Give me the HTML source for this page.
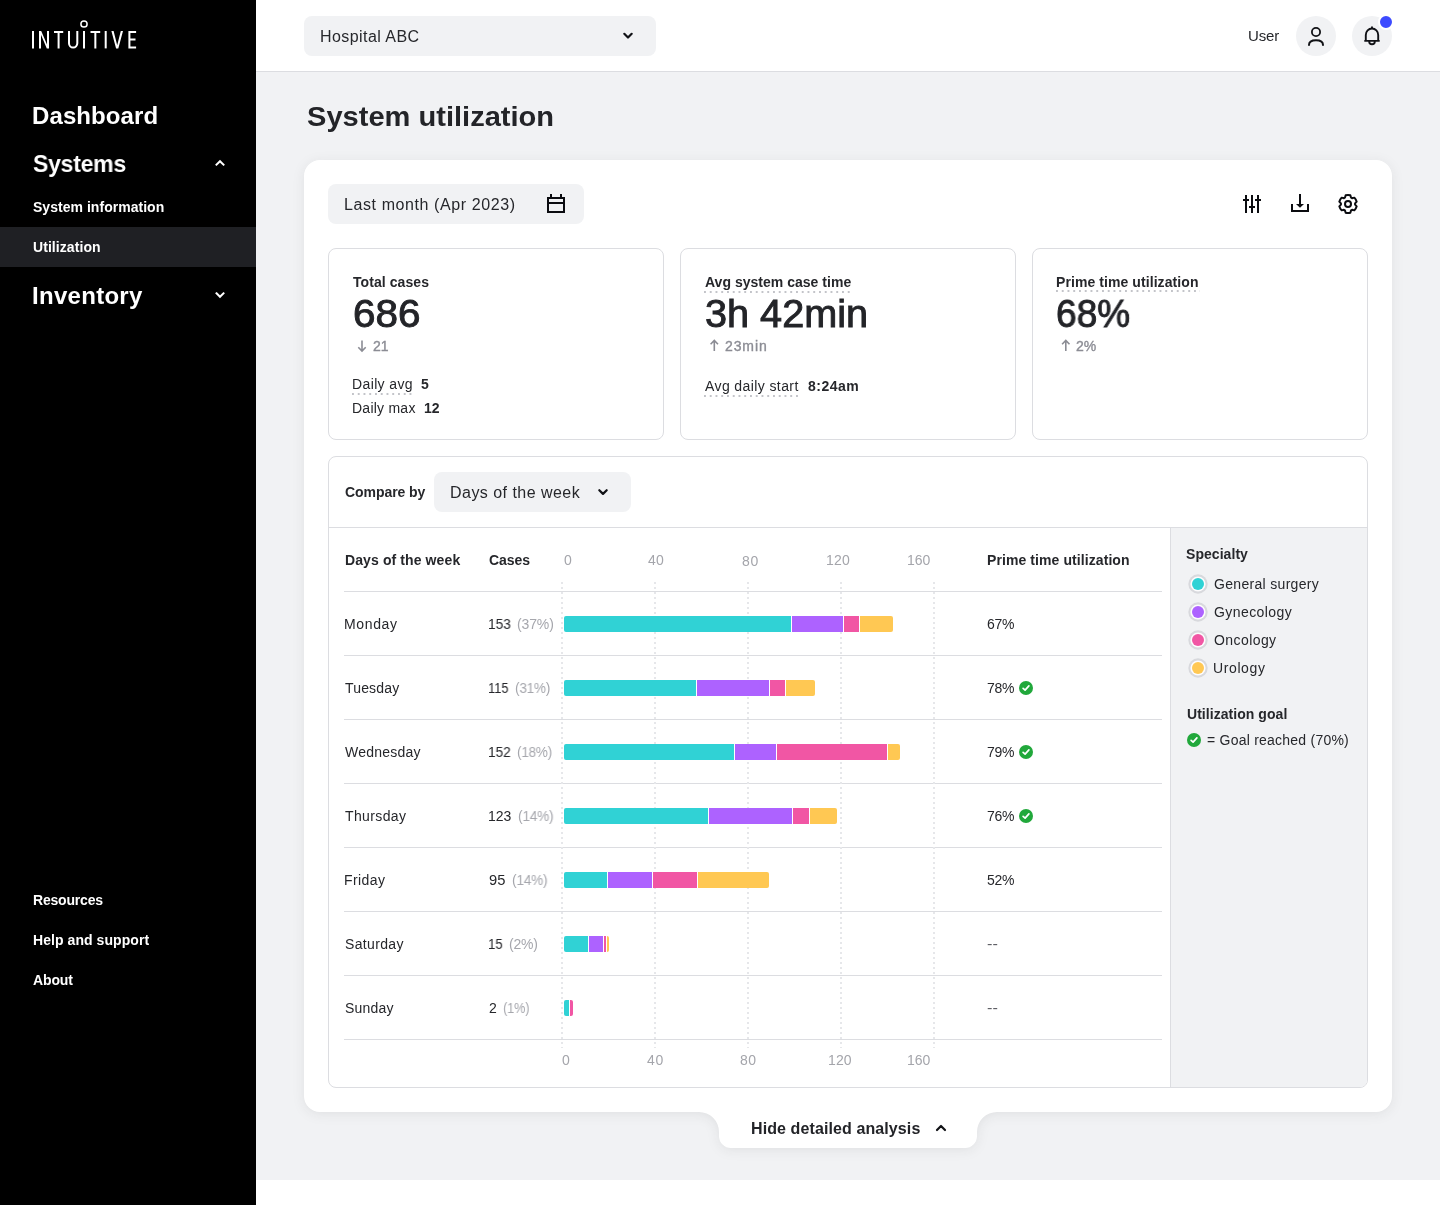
<!DOCTYPE html>
<html><head><meta charset="utf-8"><title>System utilization</title>
<style>
html,body{margin:0;padding:0;}
body{width:1440px;height:1205px;overflow:hidden;position:relative;background:#ffffff;font-family:"Liberation Sans",sans-serif;}
.ab{position:absolute;}
.t{position:absolute;white-space:nowrap;font-family:"Liberation Sans",sans-serif;will-change:transform;}
#side{position:absolute;left:0;top:0;width:256px;height:1205px;background:#000;}
#hl{position:absolute;left:0;top:227px;width:256px;height:40px;background:#1f2024;}
#main{position:absolute;left:256px;top:72px;width:1184px;height:1108px;background:#f1f2f4;}
#head{position:absolute;left:256px;top:0;width:1184px;height:71px;background:#fff;border-bottom:1px solid #dcdde1;}
.sel{position:absolute;background:#f1f2f4;border-radius:8px;}
.circ{position:absolute;width:40px;height:40px;border-radius:50%;background:#f1f2f4;}
.kpi{position:absolute;top:248px;width:334px;height:190px;border:1px solid #dcdde1;border-radius:8px;background:#fff;}
#cmp{position:absolute;left:328px;top:456px;width:1038px;height:630px;border:1px solid #dcdde1;border-radius:8px;background:#fff;overflow:hidden;}
#cmpsep{position:absolute;left:0;top:70px;width:1038px;height:1px;background:#dcdde1;}
#legend{position:absolute;left:841px;top:71px;width:197px;height:559px;background:#f1f2f4;border-left:1px solid #dcdde1;}
.sep{position:absolute;left:344px;width:818px;height:1px;background:#dcdde1;}
.grid{position:absolute;top:582px;height:466px;width:2px;background-image:linear-gradient(to bottom,#e6e7ea 0,#e6e7ea 2px,transparent 2px,transparent 5px);background-size:2px 5px;}
.b{position:absolute;height:16px;}
.ldot{position:absolute;width:12px;height:12px;border-radius:50%;box-shadow:0 0 0 1.6px #fdfcfd,0 0 0 3.7px #d8d9dd;}
.dot-ul{position:absolute;height:2px;background-image:linear-gradient(to right,#c3c4c9 0,#c3c4c9 2px,transparent 2px,transparent 5.75px);background-size:5.75px 2px;}
</style></head>
<body>
<div id="main"></div>
<div id="head"></div>
<div class="sel" style="left:304px;top:16px;width:352px;height:40px"></div>
<div class="circ" style="left:1296px;top:16px"></div>
<div class="circ" style="left:1352px;top:16px"></div>
<div class="ab" style="left:1378px;top:14px;width:12px;height:12px;border-radius:50%;background:#3d4bff;border:2px solid #fff"></div>

<svg class="ab" style="left:0;top:0;overflow:visible;filter:drop-shadow(0 2px 6px rgba(20,22,30,0.08))" width="1440" height="1205">
<path fill="#fff" d="M320 160 H1376 A16 16 0 0 1 1392 176 V1096 A16 16 0 0 1 1376 1112 H997 A20 20 0 0 0 977 1132 V1136 A12 12 0 0 1 965 1148 H731 A12 12 0 0 1 719 1136 V1132 A20 20 0 0 0 699 1112 H320 A16 16 0 0 1 304 1096 V176 A16 16 0 0 1 320 160 Z"/>
</svg>

<div class="sel" style="left:328px;top:184px;width:256px;height:40px"></div>
<div class="kpi" style="left:328px"></div>
<div class="kpi" style="left:680px"></div>
<div class="kpi" style="left:1032px"></div>
<div class="dot-ul" style="left:352px;top:393px;width:61px"></div>
<div class="dot-ul" style="left:704px;top:291px;width:148px"></div>
<div class="dot-ul" style="left:704px;top:395px;width:96px"></div>
<div class="dot-ul" style="left:1056px;top:290px;width:144px"></div>

<div id="cmp"><div id="cmpsep"></div><div id="legend"></div></div>
<div class="sel" style="left:434px;top:472px;width:197px;height:40px"></div>
<div class="sep" style="top:591px"></div>
<div class="sep" style="top:655px"></div>
<div class="sep" style="top:719px"></div>
<div class="sep" style="top:783px"></div>
<div class="sep" style="top:847px"></div>
<div class="sep" style="top:911px"></div>
<div class="sep" style="top:975px"></div>
<div class="sep" style="top:1039px"></div>
<div class="grid" style="left:561px"></div>
<div class="grid" style="left:654px"></div>
<div class="grid" style="left:747px"></div>
<div class="grid" style="left:840px"></div>
<div class="grid" style="left:933px"></div>
<div class="b" style="left:564px;top:616px;width:227px;background:#30d2d5;border-radius:2px 0 0 2px;"></div>
<div class="b" style="left:792px;top:616px;width:51px;background:#ad62ff;"></div>
<div class="b" style="left:844px;top:616px;width:15px;background:#f156a4;"></div>
<div class="b" style="left:860px;top:616px;width:33px;background:#ffc853;border-radius:0 2px 2px 0;"></div>
<div class="b" style="left:564px;top:680px;width:132px;background:#30d2d5;border-radius:2px 0 0 2px;"></div>
<div class="b" style="left:697px;top:680px;width:72px;background:#ad62ff;"></div>
<div class="b" style="left:770px;top:680px;width:15px;background:#f156a4;"></div>
<div class="b" style="left:786px;top:680px;width:29px;background:#ffc853;border-radius:0 2px 2px 0;"></div>
<div class="b" style="left:564px;top:744px;width:170px;background:#30d2d5;border-radius:2px 0 0 2px;"></div>
<div class="b" style="left:735px;top:744px;width:41px;background:#ad62ff;"></div>
<div class="b" style="left:777px;top:744px;width:110px;background:#f156a4;"></div>
<div class="b" style="left:888px;top:744px;width:12px;background:#ffc853;border-radius:0 2px 2px 0;"></div>
<div class="b" style="left:564px;top:808px;width:144px;background:#30d2d5;border-radius:2px 0 0 2px;"></div>
<div class="b" style="left:709px;top:808px;width:83px;background:#ad62ff;"></div>
<div class="b" style="left:793px;top:808px;width:16px;background:#f156a4;"></div>
<div class="b" style="left:810px;top:808px;width:27px;background:#ffc853;border-radius:0 2px 2px 0;"></div>
<div class="b" style="left:564px;top:872px;width:43px;background:#30d2d5;border-radius:2px 0 0 2px;"></div>
<div class="b" style="left:608px;top:872px;width:44px;background:#ad62ff;"></div>
<div class="b" style="left:653px;top:872px;width:44px;background:#f156a4;"></div>
<div class="b" style="left:698px;top:872px;width:71px;background:#ffc853;border-radius:0 2px 2px 0;"></div>
<div class="b" style="left:564px;top:936px;width:24px;background:#30d2d5;border-radius:2px 0 0 2px;"></div>
<div class="b" style="left:589px;top:936px;width:14px;background:#ad62ff;"></div>
<div class="b" style="left:604px;top:936px;width:2px;background:#f156a4;"></div>
<div class="b" style="left:607px;top:936px;width:2px;background:#ffc853;border-radius:0 2px 2px 0;"></div>
<div class="b" style="left:564px;top:1000px;width:5px;background:#30d2d5;border-radius:2px 0 0 2px;"></div>
<div class="b" style="left:570px;top:1000px;width:3px;background:#f156a4;border-radius:0 2px 2px 0;"></div>
<svg class="ab" style="left:1019px;top:681px" width="14" height="14" viewBox="0 0 14 14"><circle cx="7" cy="7" r="7" fill="#21a83b"/><path d="M4.1 7.3 L6.1 9.1 L9.9 4.9" fill="none" stroke="#fff" stroke-width="1.7" stroke-linecap="round" stroke-linejoin="round"/></svg>
<svg class="ab" style="left:1019px;top:745px" width="14" height="14" viewBox="0 0 14 14"><circle cx="7" cy="7" r="7" fill="#21a83b"/><path d="M4.1 7.3 L6.1 9.1 L9.9 4.9" fill="none" stroke="#fff" stroke-width="1.7" stroke-linecap="round" stroke-linejoin="round"/></svg>
<svg class="ab" style="left:1019px;top:809px" width="14" height="14" viewBox="0 0 14 14"><circle cx="7" cy="7" r="7" fill="#21a83b"/><path d="M4.1 7.3 L6.1 9.1 L9.9 4.9" fill="none" stroke="#fff" stroke-width="1.7" stroke-linecap="round" stroke-linejoin="round"/></svg>
<div class="ldot" style="left:1192px;top:578px;background:#30d2d5"></div>
<div class="ldot" style="left:1192px;top:606px;background:#ad62ff"></div>
<div class="ldot" style="left:1192px;top:634px;background:#f156a4"></div>
<div class="ldot" style="left:1192px;top:662px;background:#ffc853"></div>

<div id="side"></div>
<div id="hl"></div>

<svg class="ab" style="left:0;top:0" width="1440" height="1205" fill="none" stroke-linecap="butt">
<!-- logo -->
<g stroke="#fff" stroke-width="2">
<path d="M33 31 V48.4"/>
<path d="M54 32 H63.2 M58.6 32 V48.4"/>
<path d="M69 31 V43.2 A4.15 4.4 0 0 0 77.3 43.2 V31"/>
<path d="M84 31 V48.4"/>
<path d="M90.5 32 H100.2 M95.35 32 V48.4"/>
<path d="M105.7 31 V48.4"/>
<path d="M136.1 32 H129.4 V47.4 H136.1 M129.4 39.6 H135.5"/>
</g>
<path fill="#fff" stroke="none" d="M39 31 H41.2 L47 44.6 V31 H49 V48.4 H46.8 L41 34.8 V48.4 H39 Z"/>
<path fill="#fff" stroke="none" d="M111.4 31 H113.6 L117.2 45.2 L120.8 31 H123 L118.3 48.4 H116.1 Z"/>
<circle cx="84" cy="24" r="3.1" stroke="#fff" stroke-width="1.5"/>
<!-- sidebar chevrons -->
<path d="M216.5 164.7 L220 161.2 L223.5 164.7" stroke="#fff" stroke-width="2" stroke-linecap="square"/>
<path d="M216.5 293.3 L220 296.8 L223.5 293.3" stroke="#fff" stroke-width="2" stroke-linecap="square"/>
<!-- header chevron -->
<path d="M624.3 33.8 L628 37.5 L631.7 33.8" stroke="#111216" stroke-width="2.2" stroke-linecap="round" stroke-linejoin="round"/>
<!-- compare chevron -->
<path d="M599.3 490.2 L603 493.9 L606.7 490.2" stroke="#111216" stroke-width="2.2" stroke-linecap="round" stroke-linejoin="round"/>
<!-- tab chevron -->
<path d="M937 1130 L941 1126 L945 1130" stroke="#111216" stroke-width="2.2" stroke-linecap="round" stroke-linejoin="round"/>
<!-- user icon -->
<circle cx="1316" cy="32" r="4.1" stroke="#111216" stroke-width="1.8"/>
<path d="M1309 44.9 C1309 41.8 1312 40.2 1316 40.2 C1320 40.2 1323 41.8 1323 44.9" stroke="#111216" stroke-width="2" stroke-linecap="round"/>
<!-- bell -->
<path d="M1372 26.5 V28.3 M1365.8 40.9 V35 A6.2 6.6 0 0 1 1378.2 35 V40.9 M1364.3 40.9 H1379.7 M1369.2 41.5 A2.8 2.8 0 0 0 1374.8 41.5" stroke="#111216" stroke-width="1.9"/>
<!-- calendar -->
<rect x="548" y="198" width="16" height="14" stroke="#0b0c10" stroke-width="2"/>
<path d="M549 203 H563 M551 194 V198 M561 194 V198" stroke="#0b0c10" stroke-width="2"/>
<!-- sliders -->
<path d="M1246 195 V213 M1252 195 V213 M1258 195 V213 M1243 200 H1249 M1249 207 H1255 M1255 200 H1261" stroke="#0b0c10" stroke-width="2"/>
<!-- download -->
<path d="M1300 194 V206 M1292 204 V211 H1308 V204" stroke="#0b0c10" stroke-width="2"/>
<path d="M1296 204 L1304 204 L1300 207.8 Z" fill="#0b0c10"/>
<!-- gear -->
<path d="M1345.00 197.57 L1345.67 195.31 A9.0 9.0 0 0 1 1350.33 195.31 L1351.00 197.57 A7.1 7.1 0 0 1 1352.07 198.18 L1354.36 197.64 A9.0 9.0 0 0 1 1356.69 201.67 L1355.07 203.38 A7.1 7.1 0 0 1 1355.07 204.62 L1356.69 206.33 A9.0 9.0 0 0 1 1354.36 210.36 L1352.07 209.82 A7.1 7.1 0 0 1 1351.00 210.43 L1350.33 212.69 A9.0 9.0 0 0 1 1345.67 212.69 L1345.00 210.43 A7.1 7.1 0 0 1 1343.93 209.82 L1341.64 210.36 A9.0 9.0 0 0 1 1339.31 206.33 L1340.93 204.62 A7.1 7.1 0 0 1 1340.93 203.38 L1339.31 201.67 A9.0 9.0 0 0 1 1341.64 197.64 L1343.93 198.18 A7.1 7.1 0 0 1 1345.00 197.57 Z" stroke="#0b0c10" stroke-width="2" stroke-linejoin="round"/>
<circle cx="1348" cy="204" r="3" stroke="#0b0c10" stroke-width="2"/>
<!-- kpi arrows -->
<path d="M362 340.5 V351 M358.3 347.3 L362 351 L365.7 347.3" stroke="#8b8c94" stroke-width="1.6"/>
<path d="M714.3 340.5 V351 M710.6 344.2 L714.3 340.5 L718 344.2" stroke="#8b8c94" stroke-width="1.6"/>
<path d="M1065.8 340.5 V351 M1062.1 344.2 L1065.8 340.5 L1069.5 344.2" stroke="#8b8c94" stroke-width="1.6"/>
</svg>
<svg class="ab" style="left:1187px;top:733px" width="14" height="14" viewBox="0 0 14 14"><circle cx="7" cy="7" r="7" fill="#21a83b"/><path d="M4.1 7.3 L6.1 9.1 L9.9 4.9" fill="none" stroke="#fff" stroke-width="1.7" stroke-linecap="round" stroke-linejoin="round"/></svg>
<div class="t" style="left:32.20px;top:103.90px;font-size:24px;line-height:24px;font-weight:700;color:#ffffff;letter-spacing:0.101px">Dashboard</div>
<div class="t" style="left:33.20px;top:151.70px;font-size:24px;line-height:24px;font-weight:700;color:#ffffff;letter-spacing:-0.250px;transform:scaleX(0.9579);transform-origin:0 0">Systems</div>
<div class="t" style="left:33.20px;top:199.70px;font-size:14px;line-height:14px;font-weight:700;color:#ffffff;letter-spacing:0.033px">System information</div>
<div class="t" style="left:33.20px;top:239.70px;font-size:14px;line-height:14px;font-weight:700;color:#ffffff;letter-spacing:0.067px">Utilization</div>
<div class="t" style="left:32.20px;top:283.70px;font-size:24px;line-height:24px;font-weight:700;color:#ffffff;letter-spacing:0.291px">Inventory</div>
<div class="t" style="left:32.70px;top:892.70px;font-size:14px;line-height:14px;font-weight:700;color:#ffffff;letter-spacing:-0.188px">Resources</div>
<div class="t" style="left:32.70px;top:932.70px;font-size:14px;line-height:14px;font-weight:700;color:#ffffff;letter-spacing:0.063px">Help and support</div>
<div class="t" style="left:32.70px;top:972.70px;font-size:14px;line-height:14px;font-weight:700;color:#ffffff;letter-spacing:-0.116px">About</div>
<div class="t" style="left:320.00px;top:28.70px;font-size:16px;line-height:16px;font-weight:400;color:#26272b;letter-spacing:0.437px">Hospital ABC</div>
<div class="t" style="left:1248.40px;top:28.00px;font-size:15px;line-height:15px;font-weight:400;color:#26272b;letter-spacing:-0.125px">User</div>
<div class="t" style="left:306.70px;top:103.70px;font-size:27px;line-height:27px;font-weight:700;color:#232428;transform:scaleX(1.0765);transform-origin:0 0">System utilization</div>
<div class="t" style="left:344.30px;top:196.70px;font-size:16px;line-height:16px;font-weight:400;color:#26272b;letter-spacing:0.592px">Last month (Apr 2023)</div>
<div class="t" style="left:352.60px;top:274.90px;font-size:14px;line-height:14px;font-weight:700;color:#26272b;letter-spacing:0.076px">Total cases</div>
<div class="t" style="left:353.04px;top:294.90px;font-size:38px;line-height:38px;font-weight:400;color:#232428;transform:scaleX(1.0642);transform-origin:0 0;-webkit-text-stroke:0.9px #232428">686</div>
<div class="t" style="left:373.00px;top:338.80px;font-size:14px;line-height:14px;font-weight:400;color:#8b8c94;-webkit-text-stroke:0.35px #8b8c94">21</div>
<div class="t" style="left:351.80px;top:376.70px;font-size:14px;line-height:14px;font-weight:400;color:#26272b;letter-spacing:0.376px">Daily avg</div>
<div class="t" style="left:420.90px;top:376.70px;font-size:14px;line-height:14px;font-weight:700;color:#26272b">5</div>
<div class="t" style="left:351.80px;top:400.70px;font-size:14px;line-height:14px;font-weight:400;color:#26272b;letter-spacing:0.243px">Daily max</div>
<div class="t" style="left:424.20px;top:400.70px;font-size:14px;line-height:14px;font-weight:700;color:#26272b">12</div>
<div class="t" style="left:704.60px;top:274.90px;font-size:14px;line-height:14px;font-weight:700;color:#26272b;letter-spacing:0.021px">Avg system case time</div>
<div class="t" style="left:705.16px;top:294.70px;font-size:38px;line-height:38px;font-weight:400;color:#232428;transform:scaleX(1.0432);transform-origin:0 0;-webkit-text-stroke:0.9px #232428">3h 42min</div>
<div class="t" style="left:724.90px;top:338.70px;font-size:14px;line-height:14px;font-weight:400;color:#8b8c94;letter-spacing:0.889px;-webkit-text-stroke:0.35px #8b8c94">23min</div>
<div class="t" style="left:704.60px;top:378.90px;font-size:14px;line-height:14px;font-weight:400;color:#26272b;letter-spacing:0.401px">Avg daily start</div>
<div class="t" style="left:808.00px;top:378.90px;font-size:14px;line-height:14px;font-weight:700;color:#26272b;letter-spacing:0.479px">8:24am</div>
<div class="t" style="left:1056.40px;top:275.00px;font-size:14px;line-height:14px;font-weight:700;color:#26272b;letter-spacing:0.079px">Prime time utilization</div>
<div class="t" style="left:1056.23px;top:294.50px;font-size:38px;line-height:38px;font-weight:400;color:#232428;transform:scaleX(0.9749);transform-origin:0 0;-webkit-text-stroke:0.9px #232428">68%</div>
<div class="t" style="left:1076.40px;top:338.70px;font-size:14px;line-height:14px;font-weight:400;color:#8b8c94;-webkit-text-stroke:0.35px #8b8c94">2%</div>
<div class="t" style="left:344.60px;top:484.70px;font-size:14px;line-height:14px;font-weight:700;color:#26272b;letter-spacing:-0.058px">Compare by</div>
<div class="t" style="left:449.90px;top:484.50px;font-size:16px;line-height:16px;font-weight:400;color:#26272b;letter-spacing:0.465px">Days of the week</div>
<div class="t" style="left:344.50px;top:552.70px;font-size:14px;line-height:14px;font-weight:700;color:#26272b;letter-spacing:0.106px">Days of the week</div>
<div class="t" style="left:488.70px;top:552.70px;font-size:14px;line-height:14px;font-weight:700;color:#26272b;letter-spacing:-0.067px">Cases</div>
<div class="t" style="left:986.60px;top:553.00px;font-size:14px;line-height:14px;font-weight:700;color:#26272b;letter-spacing:0.083px">Prime time utilization</div>
<div class="t" style="left:564.20px;top:553.30px;font-size:14px;line-height:14px;font-weight:400;color:#a4a5ab">0</div>
<div class="t" style="left:648.00px;top:553.30px;font-size:14px;line-height:14px;font-weight:400;color:#a4a5ab;letter-spacing:0.314px">40</div>
<div class="t" style="left:741.90px;top:554.30px;font-size:14px;line-height:14px;font-weight:400;color:#a4a5ab;letter-spacing:0.814px">80</div>
<div class="t" style="left:825.60px;top:553.30px;font-size:14px;line-height:14px;font-weight:400;color:#a4a5ab;letter-spacing:0.214px">120</div>
<div class="t" style="left:906.70px;top:553.30px;font-size:14px;line-height:14px;font-weight:400;color:#a4a5ab;letter-spacing:-0.036px">160</div>
<div class="t" style="left:561.90px;top:1052.70px;font-size:14px;line-height:14px;font-weight:400;color:#a4a5ab">0</div>
<div class="t" style="left:646.90px;top:1052.70px;font-size:14px;line-height:14px;font-weight:400;color:#a4a5ab;letter-spacing:0.814px">40</div>
<div class="t" style="left:739.90px;top:1052.70px;font-size:14px;line-height:14px;font-weight:400;color:#a4a5ab;letter-spacing:0.514px">80</div>
<div class="t" style="left:827.80px;top:1052.70px;font-size:14px;line-height:14px;font-weight:400;color:#a4a5ab;letter-spacing:0.114px">120</div>
<div class="t" style="left:906.70px;top:1052.70px;font-size:14px;line-height:14px;font-weight:400;color:#a4a5ab;letter-spacing:-0.036px">160</div>
<div class="t" style="left:343.70px;top:616.70px;font-size:14px;line-height:14px;font-weight:400;color:#26272b;letter-spacing:0.639px">Monday</div>
<div class="t" style="left:488.22px;top:616.70px;font-size:14px;line-height:14px;font-weight:400;color:#26272b;transform:scaleX(0.9791);transform-origin:0 0">153</div>
<div class="t" style="left:517.10px;top:616.70px;font-size:14px;line-height:14px;font-weight:400;color:#a6a7ad;letter-spacing:-0.121px">(37%)</div>
<div class="t" style="left:986.60px;top:616.70px;font-size:14px;line-height:14px;font-weight:400;color:#26272b;letter-spacing:-0.250px;transform:scaleX(0.9899);transform-origin:0 0">67%</div>
<div class="t" style="left:344.70px;top:680.70px;font-size:14px;line-height:14px;font-weight:400;color:#26272b;letter-spacing:0.171px">Tuesday</div>
<div class="t" style="left:488.28px;top:680.70px;font-size:14px;line-height:14px;font-weight:400;color:#26272b;transform:scaleX(0.9195);transform-origin:0 0">115</div>
<div class="t" style="left:515.20px;top:680.70px;font-size:14px;line-height:14px;font-weight:400;color:#a6a7ad;letter-spacing:-0.250px;transform:scaleX(0.9697);transform-origin:0 0">(31%)</div>
<div class="t" style="left:986.60px;top:680.70px;font-size:14px;line-height:14px;font-weight:400;color:#26272b;letter-spacing:-0.250px;transform:scaleX(0.9899);transform-origin:0 0">78%</div>
<div class="t" style="left:344.70px;top:744.70px;font-size:14px;line-height:14px;font-weight:400;color:#26272b;letter-spacing:0.240px">Wednesday</div>
<div class="t" style="left:488.23px;top:744.70px;font-size:14px;line-height:14px;font-weight:400;color:#26272b;transform:scaleX(0.9746);transform-origin:0 0">152</div>
<div class="t" style="left:517.40px;top:744.70px;font-size:14px;line-height:14px;font-weight:400;color:#a6a7ad;letter-spacing:-0.250px;transform:scaleX(0.9641);transform-origin:0 0">(18%)</div>
<div class="t" style="left:986.60px;top:744.70px;font-size:14px;line-height:14px;font-weight:400;color:#26272b;letter-spacing:-0.250px;transform:scaleX(0.9899);transform-origin:0 0">79%</div>
<div class="t" style="left:344.70px;top:808.70px;font-size:14px;line-height:14px;font-weight:400;color:#26272b;letter-spacing:0.377px">Thursday</div>
<div class="t" style="left:488.20px;top:808.70px;font-size:14px;line-height:14px;font-weight:400;color:#26272b">123</div>
<div class="t" style="left:517.50px;top:808.70px;font-size:14px;line-height:14px;font-weight:400;color:#a6a7ad;letter-spacing:-0.250px;transform:scaleX(0.9781);transform-origin:0 0">(14%)</div>
<div class="t" style="left:986.60px;top:808.70px;font-size:14px;line-height:14px;font-weight:400;color:#26272b;letter-spacing:-0.250px;transform:scaleX(0.9899);transform-origin:0 0">76%</div>
<div class="t" style="left:343.70px;top:872.70px;font-size:14px;line-height:14px;font-weight:400;color:#26272b;letter-spacing:0.421px">Friday</div>
<div class="t" style="left:489.20px;top:872.70px;font-size:14px;line-height:14px;font-weight:400;color:#26272b;transform:scaleX(1.0516);transform-origin:0 0">95</div>
<div class="t" style="left:511.50px;top:872.70px;font-size:14px;line-height:14px;font-weight:400;color:#a6a7ad;letter-spacing:-0.250px;transform:scaleX(0.9781);transform-origin:0 0">(14%)</div>
<div class="t" style="left:986.60px;top:872.70px;font-size:14px;line-height:14px;font-weight:400;color:#26272b;letter-spacing:-0.250px;transform:scaleX(0.9899);transform-origin:0 0">52%</div>
<div class="t" style="left:344.70px;top:936.70px;font-size:14px;line-height:14px;font-weight:400;color:#26272b;letter-spacing:0.352px">Saturday</div>
<div class="t" style="left:488.25px;top:936.70px;font-size:14px;line-height:14px;font-weight:400;color:#26272b;transform:scaleX(0.9468);transform-origin:0 0">15</div>
<div class="t" style="left:509.20px;top:936.70px;font-size:14px;line-height:14px;font-weight:400;color:#a6a7ad;letter-spacing:-0.232px">(2%)</div>
<div class="t" style="left:986.80px;top:936.70px;font-size:14px;line-height:14px;font-weight:400;color:#5f6066;transform:scaleX(1.1592);transform-origin:0 0">--</div>
<div class="t" style="left:344.70px;top:1000.70px;font-size:14px;line-height:14px;font-weight:400;color:#26272b;letter-spacing:0.224px">Sunday</div>
<div class="t" style="left:489.20px;top:1000.70px;font-size:14px;line-height:14px;font-weight:400;color:#26272b">2</div>
<div class="t" style="left:502.60px;top:1000.70px;font-size:14px;line-height:14px;font-weight:400;color:#a6a7ad;letter-spacing:-0.250px;transform:scaleX(0.9166);transform-origin:0 0">(1%)</div>
<div class="t" style="left:986.80px;top:1000.70px;font-size:14px;line-height:14px;font-weight:400;color:#5f6066;transform:scaleX(1.1592);transform-origin:0 0">--</div>
<div class="t" style="left:1186.20px;top:546.70px;font-size:14px;line-height:14px;font-weight:700;color:#26272b;letter-spacing:0.051px">Specialty</div>
<div class="t" style="left:1214.40px;top:576.70px;font-size:14px;line-height:14px;font-weight:400;color:#26272b;letter-spacing:0.316px">General surgery</div>
<div class="t" style="left:1214.40px;top:604.70px;font-size:14px;line-height:14px;font-weight:400;color:#26272b;letter-spacing:0.419px">Gynecology</div>
<div class="t" style="left:1214.40px;top:632.70px;font-size:14px;line-height:14px;font-weight:400;color:#26272b;letter-spacing:0.422px">Oncology</div>
<div class="t" style="left:1213.40px;top:660.70px;font-size:14px;line-height:14px;font-weight:400;color:#26272b;letter-spacing:0.610px">Urology</div>
<div class="t" style="left:1187.10px;top:706.70px;font-size:14px;line-height:14px;font-weight:700;color:#26272b;letter-spacing:0.049px">Utilization goal</div>
<div class="t" style="left:1207.10px;top:732.70px;font-size:14px;line-height:14px;font-weight:400;color:#26272b;letter-spacing:0.232px">= Goal reached (70%)</div>
<div class="t" style="left:751.10px;top:1120.70px;font-size:16px;line-height:16px;font-weight:700;color:#232428;letter-spacing:0.101px">Hide detailed analysis</div>
</body></html>
